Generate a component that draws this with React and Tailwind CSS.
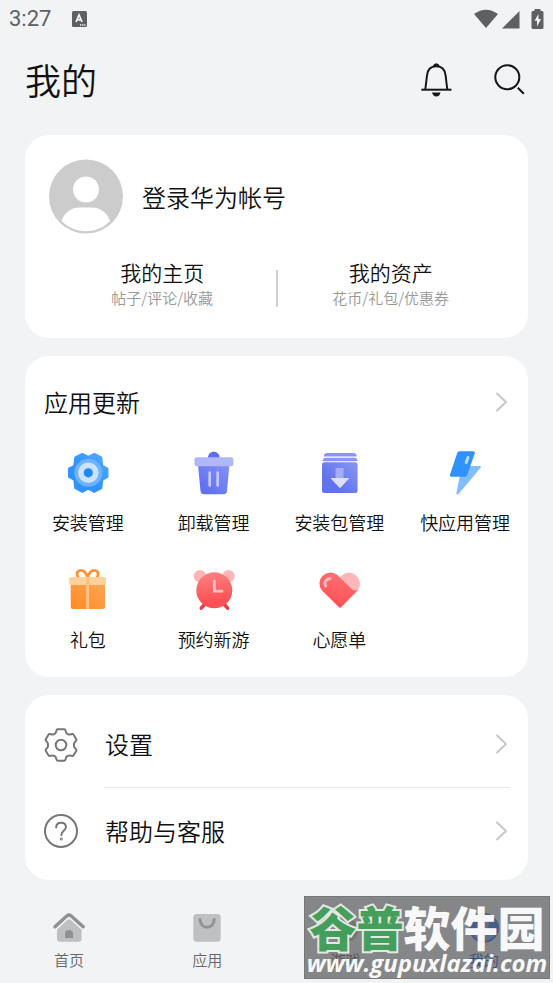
import React from "react";

const TOOLS = [
  { label: "安装管理", Icon: GearIcon },
  { label: "卸载管理", Icon: TrashIcon },
  { label: "安装包管理", Icon: PackageIcon },
  { label: "快应用管理", Icon: BoltIcon },
  { label: "礼包", Icon: GiftIcon },
  { label: "预约新游", Icon: ClockIcon },
  { label: "心愿单", Icon: HeartIcon },
];

const TABS = [
  { label: "首页", Icon: HomeIcon },
  { label: "应用", Icon: BagIcon },
  { label: "游戏", Icon: GameIcon },
  { label: "我的", Icon: MeIcon, active: true },
];

function GearIcon() {
  return (
    <svg className="size-12" viewBox="0 0 48 48" aria-hidden="true">
      <defs>
        <linearGradient id="gear" x1="1" y1="0" x2="0" y2="1">
          <stop offset="0" stopColor="#55aaff" />
          <stop offset="0.6" stopColor="#2e92ff" />
        </linearGradient>
      </defs>
      <path
        d="M30.300 4.800L37.300 8.400L38.300 16.800L43.500 19.700V27.900L38.300 30.800L37.300 39.200L30.300 42.800L24.300 39.700L18.300 42.800L11.300 39.200L10.300 30.800L5 27.900V19.700L10.300 16.800L11.300 8.400L18.300 4.800L24.300 7.900Z"
        fill="url(#gear)"
        stroke="url(#gear)"
        strokeWidth="2"
        strokeLinejoin="round"
      />
      <circle cx="24.300" cy="23.800" r="14" fill="#6db3ff" />
      <circle cx="24.300" cy="23.800" r="10.200" fill="#cbe3ff" />
      <circle cx="24.300" cy="23.800" r="4.600" fill="#1f87fb" />
    </svg>
  );
}

function TrashIcon() {
  return (
    <svg className="size-12" viewBox="0 0 48 48" aria-hidden="true">
      <defs>
        <linearGradient id="bin" x1="1" y1="0" x2="0.2" y2="0.8">
          <stop offset="0" stopColor="#8692f7" />
          <stop offset="1" stopColor="#6072ee" />
        </linearGradient>
      </defs>
      <path d="M17.800 9C18 5 20.500 2.700 23.800 2.700S29.600 5 29.800 9Z" fill="#5d6ff0" />
      <path d="M8 16H39.400L37 42C36.700 44.300 35.500 45.300 33.500 45.300H14C12 45.300 10.800 44.300 10.500 42Z" fill="url(#bin)" />
      <rect x="4.400" y="8.300" width="39" height="8.900" rx="2.500" fill="#b0b8fb" />
      <path d="M19.700 23.500V36.500M27.700 23.500V36.500" stroke="#c3c9fd" strokeWidth="2.700" strokeLinecap="round" />
    </svg>
  );
}

function PackageIcon() {
  return (
    <svg className="size-12" viewBox="0 0 48 48" aria-hidden="true">
      <defs>
        <linearGradient id="pack" x1="1" y1="0" x2="0.3" y2="0.7">
          <stop offset="0" stopColor="#8a96f5" />
          <stop offset="1" stopColor="#6174ec" />
        </linearGradient>
      </defs>
      <path d="M8.800 7.600C9 5 10 4 12 4H38.500C40.500 4 41.500 5 41.700 7.600Z" fill="#8996f6" />
      <path d="M7.600 12.200C7.700 9.800 9 8.700 11 8.700H39.500C41.500 8.700 42.500 9.800 42.600 12.200Z" fill="#8996f6" />
      <rect x="7" y="13.300" width="35.600" height="30.700" rx="2.500" fill="url(#pack)" />
      <rect x="20.600" y="19" width="8" height="11" fill="#a4adf8" />
      <path d="M16.500 29H33.400C34 29 34 29.600 33.600 30L25.700 38.600Q25 39.200 24.300 38.600L16.300 30C15.900 29.500 16 29 16.500 29Z" fill="#dde0fd" />
    </svg>
  );
}

function BoltIcon() {
  return (
    <svg className="size-12" viewBox="0 0 48 48" aria-hidden="true">
      <path d="M28 17H39Q40.500 17.300 39.600 18.800L17.600 45Q16 46 15.300 44.400L19 26Z" fill="#80beff" />
      <path d="M18.500 2.300H32.500Q34.300 2.500 33.800 4.200L26.200 26Q25.500 27.700 23.500 27.700H10.300Q8.500 27.500 9 25.800L16.200 4Q16.900 2.300 18.500 2.300Z" fill="#2e92ff" />
      <path d="M27 8.500L25.200 13.500" stroke="#b7daff" strokeWidth="3" strokeLinecap="round" />
    </svg>
  );
}

function GiftIcon() {
  return (
    <svg className="size-12" viewBox="0 0 48 48" aria-hidden="true">
      <defs>
        <linearGradient id="gift" x1="1" y1="0" x2="0.2" y2="0.9">
          <stop offset="0" stopColor="#ffa655" />
          <stop offset="1" stopColor="#ff8e2c" />
        </linearGradient>
      </defs>
      <path d="M23.600 12C22.500 6 19 3.700 15.800 4.500C12.300 5.600 12.300 9 14.500 11.500M23.600 12C24.700 6 28.200 3.700 31.400 4.500C34.900 5.600 34.900 9 32.700 11.500" fill="none" stroke="#ff922f" strokeWidth="2.800" />
      <path d="M6.700 17H41V40.500Q41 43 38.500 43H9.200Q6.700 43 6.700 40.500Z" fill="url(#gift)" />
      <rect x="5" y="11" width="37" height="8" rx="2" fill="#ffd19d" />
      <path d="M23.600 12V43" stroke="#ffc184" strokeWidth="3" />
    </svg>
  );
}

function ClockIcon() {
  return (
    <svg className="size-12" viewBox="0 0 48 48" aria-hidden="true">
      <defs>
        <linearGradient id="clock" x1="0.5" y1="0" x2="0.6" y2="0.8">
          <stop offset="0" stopColor="#ff8080" />
          <stop offset="1" stopColor="#fb5054" />
        </linearGradient>
      </defs>
      <circle cx="10" cy="10.200" r="6.200" fill="#ffb6b8" />
      <circle cx="38.500" cy="10.200" r="6.200" fill="#ffb6b8" />
      <path d="M14.500 38.500L11.200 42.200M34.300 38.500L37.600 42.200" stroke="#e93b42" strokeWidth="3.400" strokeLinecap="round" />
      <circle cx="24.300" cy="24.300" r="18" fill="url(#clock)" />
      <path d="M24.300 15V25.200H32" fill="none" stroke="#ffc4c5" strokeWidth="2.700" strokeLinecap="round" />
    </svg>
  );
}

function HeartIcon() {
  return (
    <svg className="size-12" viewBox="0 0 48 48" aria-hidden="true">
      <defs>
        <linearGradient id="heart" x1="0.6" y1="0" x2="0.3" y2="1">
          <stop offset="0" stopColor="#ff7074" />
          <stop offset="1" stopColor="#fb4f53" />
        </linearGradient>
      </defs>
      <path d="M25 11.500A10.800 10.800 0 1 1 43 23.800Q39 27 34 24Z" fill="#ffb6b8" />
      <path d="M7 24.500A11 11 0 0 1 22.500 9L35 21.500Q39.500 26.500 44 23.200L26 41.300Q25 42.300 24 41.300Z" fill="url(#heart)" />
      <path d="M10.700 20Q7.800 14.500 15 12.500" fill="none" stroke="#ffb9bb" strokeWidth="3" strokeLinecap="round" />
    </svg>
  );
}

function HomeIcon() {
  return (
    <svg className="size-8" viewBox="0 0 32 32" aria-hidden="true">
      <path d="M4 17.500L14.500 7.800Q16 6.500 17.500 7.800L28.600 17.500V26.500Q28.600 29.700 25.500 29.700H7.200Q4 29.700 4 26.500Z" fill="#bfc0c2" />
      <path d="M2 14.800L14 3.800Q16 2.300 18 3.800L30.200 14.800" fill="none" stroke="#f1f3f5" strokeWidth="6" />
      <path d="M2 14.800L14 3.800Q16 2.300 18 3.800L30.200 14.800" fill="none" stroke="#8f9193" strokeWidth="3.400" strokeLinecap="round" />
      <path d="M12 26V21.500Q12 18 16 18T20 21.500V26Z" fill="#8f9193" />
    </svg>
  );
}

function BagIcon() {
  return (
    <svg className="size-8" viewBox="0 0 32 32" aria-hidden="true">
      <rect x="2.300" y="2" width="27.400" height="27.700" rx="3.500" fill="#bfc0c2" />
      <path d="M9 7.500C9.500 17.800 22.700 17.800 23.200 7.500" fill="none" stroke="#8f9193" strokeWidth="3" strokeLinecap="round" />
    </svg>
  );
}

function GameIcon() {
  return (
    <svg className="size-8" viewBox="0 0 32 32" aria-hidden="true">
      <circle cx="16" cy="18" r="12" fill="#bfc0c2" />
      <path d="M4 12L16 16" stroke="#8f9193" strokeWidth="3" strokeLinecap="round" />
    </svg>
  );
}

function MeIcon() {
  return (
    <svg className="size-8" viewBox="0 0 32 32" aria-hidden="true">
      <circle cx="16" cy="16" r="15" fill="#3f7bf5" />
      <circle cx="16" cy="12" r="5" fill="#8eb2ff" />
      <path d="M6 24Q16 14 26 24Q16 34 6 24Z" fill="#8eb2ff" />
    </svg>
  );
}

function Chevron() {
  return (
    <svg className="h-6 w-4 shrink-0" viewBox="0 0 16 24" fill="none" stroke="#c8c8c8" strokeWidth="2" strokeLinecap="round" strokeLinejoin="round" aria-hidden="true">
      <path d="M3 3.500L12 12L3 20.500" />
    </svg>
  );
}

function StatusBar() {
  return (
    <div className="flex h-[38px] items-center justify-between px-[9px] text-[#5f6062]">
      <div className="flex items-center gap-5">
        <span className="font-['Roboto',sans-serif] text-[22px] leading-6 font-normal">3:27</span>
        <svg className="size-4" viewBox="0 0 16 16" aria-hidden="true">
          <rect x="1" width="15" height="16" rx="1.500" fill="currentColor" />
          <path d="M5 11L8 4L11 11M6 8.800H10" fill="none" stroke="#f1f3f5" strokeWidth="1.800" />
          <path d="M9 14H14.500" stroke="#f1f3f5" strokeWidth="1.300" strokeDasharray="1.300 0.800" />
        </svg>
      </div>
      <svg className="h-5 w-[70px]" viewBox="0 0 70 20" fill="currentColor" aria-hidden="true">
        <path d="M0 5Q12 -3.500 24 5L12 19Z" />
        <path d="M28 19.500L45.500 2V19.500Z" />
        <path d="M60.500 0H66.500V2H68Q69.500 2 69.500 3.500V18.500Q69.500 20 68 20H59Q57.500 20 57.500 18.500V3.500Q57.500 2 59 2H60.500Z" />
        <path d="M64.500 5L60.500 11.800H63V17.500L67 10H64.500Z" fill="#f1f3f5" />
      </svg>
    </div>
  );
}

function Header() {
  return (
    <header className="flex h-[97px] items-start justify-between pt-6 pr-[26px] pl-[25px]">
      <h1 className="text-4xl leading-[34px]">我的</h1>
      <div className="flex gap-[37px]">
        <button type="button" aria-label="消息">
          <svg className="size-9" viewBox="0 0 36 36" fill="none" stroke="#161616" strokeWidth="2" aria-hidden="true">
            <path d="M3.300 27.700H33.500" />
            <path d="M7.300 27.500L9 13.500C9.600 7.500 13 4.200 18.300 4.200S27 7.500 27.600 13.500L29.300 27.500" />
            <path d="M14.800 4Q16 1.300 18.300 1.300T21.800 4Q18.300 5 14.800 4Z" fill="#161616" stroke="none" />
            <path d="M14 30.500H22.600Q21.500 34.500 18.300 34.500T14 30.500Z" fill="#161616" stroke="none" />
          </svg>
        </button>
        <button type="button" aria-label="搜索">
          <svg className="size-9" viewBox="0 0 36 36" fill="none" stroke="#161616" strokeWidth="2" aria-hidden="true">
            <circle cx="16.300" cy="15.200" r="12" />
            <path d="M26.800 25.800L32.800 31.800" />
          </svg>
        </button>
      </div>
    </header>
  );
}

function ProfileLink({ title, detail }) {
  return (
    <a href="#" className="flex-1 text-center">
      <span className="block text-[21px] leading-7">{title}</span>
      <span className="block text-[15px] leading-6 text-[#999999]">{detail}</span>
    </a>
  );
}

function ProfileCard() {
  return (
    <section className="rounded-3xl bg-white px-6 pt-6 pb-7">
      <button type="button" className="flex items-center gap-[18px] text-left">
        <svg className="size-[75px]" viewBox="0 0 75 75" aria-hidden="true">
          <circle cx="37" cy="37.500" r="37" fill="#cccccc" />
          <circle cx="37" cy="30.500" r="13" fill="white" />
          <path d="M12.500 62C15.500 53 22.500 48.500 30.500 48.500H42.500C50.500 48.500 58 53 61 62C48.500 75.500 25.500 75.500 12.500 62Z" fill="white" />
        </svg>
        <span className="text-2xl leading-8">登录华为帐号</span>
      </button>
      <div className="mt-6 flex items-center">
        <ProfileLink title="我的主页" detail="帖子/评论/收藏" />
        <span className="mt-2 h-[37px] w-0.5 bg-[#d0d0d0]" />
        <ProfileLink title="我的资产" detail="花币/礼包/优惠券" />
      </div>
    </section>
  );
}

function ToolsCard() {
  return (
    <section className="rounded-3xl bg-white pt-[30px] pb-[26px]">
      <a href="#" className="flex items-center justify-between pr-[18px] pl-[19px]">
        <h2 className="text-2xl leading-8">应用更新</h2>
        <Chevron />
      </a>
      <div className="mt-[31px] grid grid-cols-4 gap-y-8">
        {TOOLS.map(({ label, Icon }) => (
          <button type="button" key={label} className="flex flex-col items-center gap-[13px]">
            <Icon />
            <span className="text-lg leading-6 whitespace-nowrap">{label}</span>
          </button>
        ))}
      </div>
    </section>
  );
}

function SettingsCard() {
  return (
    <section className="rounded-3xl bg-white py-[6px]">
      <a href="#" className="flex items-center pl-[18px]">
        <svg className="size-9 shrink-0" viewBox="0 0 36 36" fill="none" stroke="#777777" strokeWidth="2" strokeLinejoin="round" aria-hidden="true">
          <path d="M14.800 2.200H21.200Q22 2.200 22.300 3L23 5.200Q23.400 6.300 24.300 6.800L25 7.200Q26 7.800 27.100 7.500L29.200 7Q30 6.800 30.400 7.500L33.300 12.300Q33.700 13 33.100 13.700L31.700 15.300Q31 16.100 31 17.200V18.800Q31 19.900 31.700 20.700L33.100 22.300Q33.700 23 33.300 23.700L30.400 28.500Q30 29.200 29.200 29L27.100 28.500Q26 28.200 25 28.800L24.300 29.200Q23.400 29.700 23 30.800L22.300 33Q22 33.800 21.200 33.800H14.800Q14 33.800 13.700 33L13 30.800Q12.600 29.700 11.700 29.200L11 28.800Q10 28.200 8.900 28.500L6.800 29Q6 29.200 5.600 28.500L2.700 23.700Q2.300 23 2.900 22.300L4.300 20.700Q5 19.900 5 18.800V17.200Q5 16.100 4.300 15.300L2.900 13.700Q2.300 13 2.700 12.300L5.600 7.500Q6 6.800 6.800 7L8.900 7.500Q10 7.800 11 7.200L11.700 6.800Q12.600 6.300 13 5.200L13.700 3Q14 2.200 14.800 2.200Z" />
          <circle cx="18" cy="18" r="5.300" />
        </svg>
        <span className="mr-[18px] ml-[25px] flex h-[87px] flex-1 items-center justify-between border-b border-[#e9e9e9] pl-px text-2xl leading-8">
          设置
          <Chevron />
        </span>
      </a>
      <a href="#" className="flex items-center pl-[18px]">
        <svg className="size-9 shrink-0" viewBox="0 0 36 36" fill="none" stroke="#777777" strokeWidth="2" strokeLinecap="round" aria-hidden="true">
          <circle cx="18" cy="18" r="16" />
          <path d="M13.200 14.500C13.200 11.500 15.200 9.800 18 9.800S22.900 11.500 22.900 14.200C22.900 17.800 18.300 17.700 18.300 22" />
          <circle cx="18.300" cy="26" r="0.500" />
        </svg>
        <span className="mr-[18px] ml-[25px] flex h-[86px] flex-1 items-center justify-between pl-px text-2xl leading-8">
          帮助与客服
          <Chevron />
        </span>
      </a>
    </section>
  );
}

function Watermark() {
  return (
    <div className="pointer-events-none absolute right-[3px] bottom-1 flex h-[83px] w-[246px] flex-col items-center border border-[#777777] bg-[#4b4b4b]/65 font-bold whitespace-nowrap text-white">
      <div className="mt-1 text-[47px] leading-[50px] font-black opacity-95">
        <span className="text-[#43a05a] [-webkit-text-stroke:4px_#e8efe8] [paint-order:stroke_fill]">谷普</span>
        <span>软件园</span>
      </div>
      <div className="font-['Open_Sans',sans-serif] text-2xl leading-6 italic opacity-95">www.gupuxlazai.com</div>
    </div>
  );
}

function TabBar() {
  return (
    <nav className="relative flex h-[103px] pt-8">
      {TABS.map(({ label, Icon, active }) => (
        <a href="#" key={label} className={`flex flex-1 flex-col items-center gap-1 text-[15px] leading-6 ${active ? "text-[#0a59f7]" : "text-[#66676a]"}`}>
          <Icon />
          {label}
        </a>
      ))}
      <Watermark />
    </nav>
  );
}

export default function App() {
  return (
    <div className="min-h-screen bg-[#f1f3f5] font-['Noto_Sans_CJK_SC',sans-serif] font-[350] text-[#111111]">
      <StatusBar />
      <Header />
      <main className="flex flex-col gap-[18px] px-[25px]">
        <ProfileCard />
        <ToolsCard />
        <SettingsCard />
      </main>
      <TabBar />
    </div>
  );
}
